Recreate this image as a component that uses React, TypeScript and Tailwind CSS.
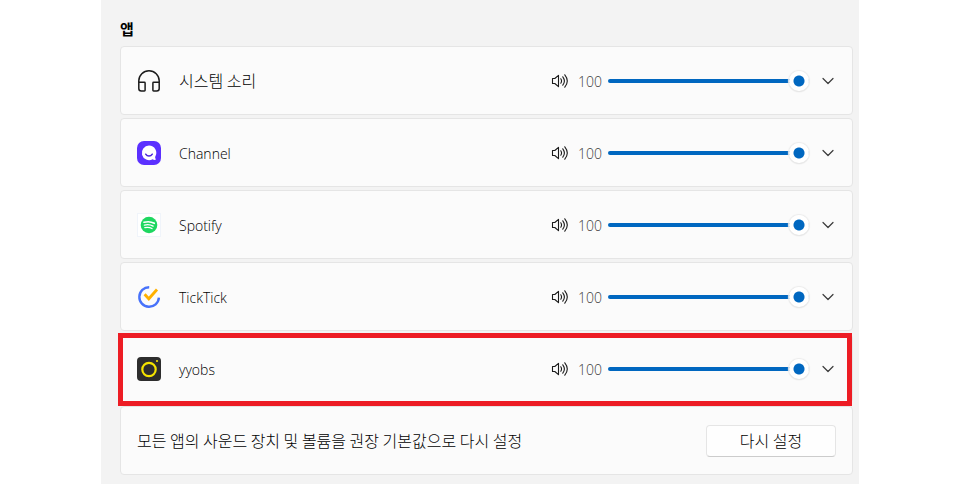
import { useState } from "react";
import type { ReactNode } from "react";

type MixerApp = {
  id: string;
  name: string;
  icon: ReactNode;
  korean?: boolean;
  highlighted?: boolean;
};

const HeadphonesIcon = () => (
  <svg viewBox="0 0 24 24" className="size-6" fill="none" stroke="#1b1b1b" strokeWidth="1.5">
    <path d="M1.8 13.2V11.8a10.2 10 0 0 1 20.4 0v1.4" />
    <path d="M1.8 13.2h5.6a.7.7 0 0 1 .7.7v7.4a.7.7 0 0 1-.7.7H4.3a2.5 2.5 0 0 1-2.5-2.5z" />
    <path d="M22.2 13.2h-5.6a.7.7 0 0 0-.7.7v7.4a.7.7 0 0 0 .7.7h3.1a2.5 2.5 0 0 0 2.5-2.5z" />
  </svg>
);

const ChannelIcon = () => (
  <svg viewBox="0 0 24 24" className="size-6">
    <rect width="24" height="24" rx="7" fill="#5b30ff" />
    <path
      d="M12 4.6a7.3 7.3 0 1 0 3.6 13.7c.8.5 2 .7 2.9.5.4-.1.5-.5.2-.8-.5-.6-.7-1.5-.5-2.3A7.3 7.3 0 0 0 12 4.6z"
      fill="#fff"
    />
    <path d="M8.7 13.2c1.7 2.5 4.9 2.5 6.6 0" fill="none" stroke="#4a22d8" strokeWidth="1.5" strokeLinecap="round" />
  </svg>
);

const SpotifyIcon = () => (
  <svg viewBox="0 0 24 24" className="size-6">
    <rect x="0.5" y="0.5" width="23" height="23" fill="#fff" stroke="#f0f4fa" />
    <circle cx="12" cy="12" r="8.3" fill="#1ed760" />
    <g fill="none" stroke="#fff" strokeLinecap="round">
      <path d="M7 9.3c3.5-1 7.3-.7 10.3 1" strokeWidth="1.6" />
      <path d="M7.4 12.1c3-.8 6-.5 8.7 1" strokeWidth="1.4" />
      <path d="M7.8 14.7c2.5-.6 5-.4 7.2.9" strokeWidth="1.2" />
    </g>
  </svg>
);

const TickTickIcon = () => (
  <svg viewBox="0 0 24 24" className="size-6" fill="none">
    <path d="M12.2 2.2a9.8 9.8 0 1 0 9.7 10.5" stroke="#4772fa" strokeWidth="2.4" />
    <path d="M7.6 9.3l4.2 4.5 8.2-9.3" stroke="#ffb000" strokeWidth="2.8" />
  </svg>
);

const YyobsIcon = () => (
  <svg viewBox="0 0 24 24" className="size-6">
    <rect width="24" height="24" rx="4" fill="#2d2d2d" />
    <circle cx="12" cy="12.5" r="6.7" fill="none" stroke="#f5e400" strokeWidth="2.2" />
    <circle cx="20" cy="4" r="1.1" fill="#f5e400" />
  </svg>
);

const SpeakerIcon = () => (
  <svg viewBox="0 0 18 16" className="h-4 w-[18px]" fill="none" stroke="#1b1b1b" strokeWidth="1.1" strokeLinecap="round">
    <path d="M1.5 5.5h2.3L7.5 2.3v11.4L3.8 10.5H1.5z" strokeLinejoin="round" />
    <path d="M9.8 5.8q1.5 2.2 0 4.4M11.8 3.8q3.2 4.2 0 8.4M13.8 1.8q5 6.2 0 12.4" />
  </svg>
);

const ChevronIcon = () => (
  <svg viewBox="0 0 12 12" className="size-3" fill="none" stroke="#3a3a3a" strokeWidth="1.2" strokeLinecap="round">
    <path d="M1 3.5l5 5 5-5" strokeLinejoin="round" />
  </svg>
);

const apps: MixerApp[] = [
  { id: "system", name: "시스템 소리", icon: <HeadphonesIcon />, korean: true },
  { id: "channel", name: "Channel", icon: <ChannelIcon /> },
  { id: "spotify", name: "Spotify", icon: <SpotifyIcon /> },
  { id: "ticktick", name: "TickTick", icon: <TickTickIcon /> },
  { id: "yyobs", name: "yyobs", icon: <YyobsIcon />, highlighted: true },
];

const cardClass = "flex min-h-[69px] items-center rounded-sm border border-[#e5e5e5] bg-[#fbfbfb] pl-4";
const koreanClass = "pb-0.5 font-['Noto_Sans_CJK_KR',sans-serif] text-base";

const VolumeRow = ({ app }: { app: MixerApp }) => {
  const [volume, setVolume] = useState(100);
  const inputId = `volume-${app.id}`;

  return (
    <li className={`relative pr-3 ${cardClass}`}>
      {app.icon}
      <label htmlFor={inputId} className={`ml-[18px] flex-1 ${app.korean ? koreanClass : "pt-0.5"}`}>
        {app.name}
      </label>
      <SpeakerIcon />
      <output htmlFor={inputId} className="ml-2 w-[25px] pt-0.5 text-right text-[#404040]">
        {volume}
      </output>
      <input
        id={inputId}
        type="range"
        min={0}
        max={100}
        value={volume}
        onChange={(e) => setVolume(Number(e.target.value))}
        className="ml-1.5 h-1 w-[201px] cursor-pointer appearance-none rounded-full [&::-webkit-slider-thumb]:size-5 [&::-webkit-slider-thumb]:appearance-none [&::-webkit-slider-thumb]:rounded-full [&::-webkit-slider-thumb]:bg-[radial-gradient(circle,#0067c0_5px,#fff_6px)] [&::-webkit-slider-thumb]:shadow-[0_0_1px_1px_#ececec,0_1px_1px_#c8c8c8]"
        style={{ background: `linear-gradient(to right, #0067c0 ${volume}%, #8a8a8a ${volume}%)` }}
      />
      <button type="button" aria-label={`${app.name} 자세히`} className="ml-[7px] flex size-6 items-center justify-center">
        <ChevronIcon />
      </button>
      {app.highlighted && (
        <span className="pointer-events-none absolute -top-0.5 right-0 -bottom-1 -left-[3px] z-10 border-5 border-[#ed1c24]" />
      )}
    </li>
  );
};

const App = () => {
  return (
    <div className="min-h-screen bg-white px-[101px] font-['Open_Sans','Noto_Sans_CJK_KR',sans-serif] text-sm font-light text-black">
      <main className="min-h-screen bg-[#f3f3f3] pt-[19px] pr-1.5 pb-2 pl-[19px]">
        <h1 className="mb-[7px] text-[15px]/5 font-bold">앱</h1>
        <ul className="flex flex-col gap-[3px]">
          {apps.map((app) => (
            <VolumeRow key={app.id} app={app} />
          ))}
          <li className={`justify-between pr-4 ${cardClass}`}>
            <p className={koreanClass}>모든 앱의 사운드 장치 및 볼륨을 권장 기본값으로 다시 설정</p>
            <button
              type="button"
              className={`h-8 w-[130px] rounded-sm border border-[#e5e5e5] border-b-[#cccccc] bg-[#fefefe] ${koreanClass}`}
            >
              다시 설정
            </button>
          </li>
        </ul>
      </main>
    </div>
  );
};

export default App;
